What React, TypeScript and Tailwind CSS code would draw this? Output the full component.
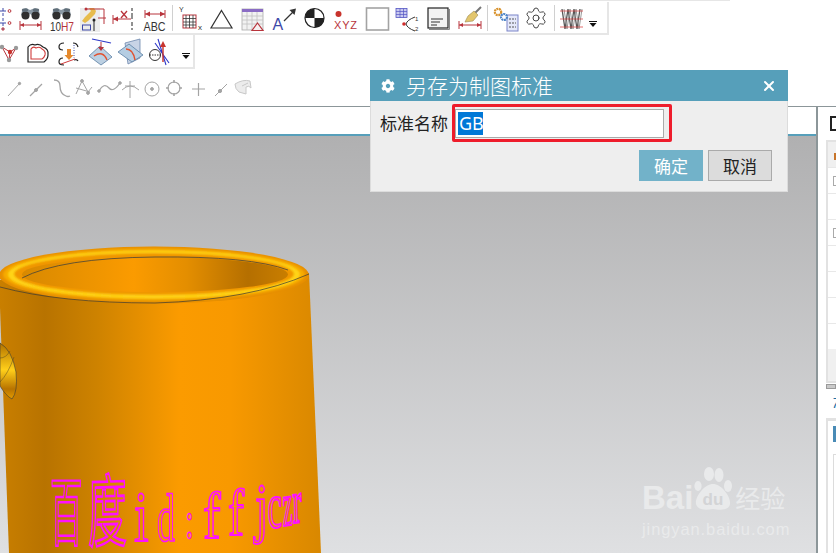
import React from "react";
import { Settings, X } from "lucide-react";
import { FaCog } from "react-icons/fa";

const RED = "#b8343c";
const BLUE = "#3d48a8";

const Ico = ({ w = 31, h = 32, children }: { w?: number; h?: number; children: React.ReactNode }) => (
	<svg width={w} height={h} viewBox={`0 0 ${w} ${h}`} className="shrink-0">
		{children}
	</svg>
);

const Sep = () => (
	<div className="w-[5px] flex justify-center shrink-0">
		<div className="w-px h-[26px] mt-[3px] bg-[#d0d0d0]" />
	</div>
);

const Binoculars = () => (
	<g>
		<path d="M7 9 L11 6 L15 8 L20 6 L24 9 L25 13 L20 15 L15 12 L11 15 L6 13 Z" fill="#8a98a3" />
		<circle cx="10.5" cy="13.5" r="4" fill="#2f2f2f" />
		<circle cx="20.5" cy="13.5" r="4" fill="#2f2f2f" />
		<ellipse cx="10" cy="8" rx="3.2" ry="1.8" fill="#5f6d78" />
		<ellipse cx="21" cy="8" rx="3.2" ry="1.8" fill="#5f6d78" />
	</g>
);

const DropArrow = ({ y }: { y: number }) => (
	<g fill="#111">
		<rect x="5" y={y} width="8" height="1" />
		<path d={`M5.5 ${y + 2} h7 l-3.5 4 z`} />
	</g>
);

const Row1 = () => (
	<div className="flex h-[33px] w-[609px] border-b-2 border-r-2 border-[#e6e6e6]">
		<Ico w={14.5}>
			<path d="M3 6V28" stroke={BLUE} strokeDasharray="3 2" />
			<path d="M0 9H6M0 21H6" stroke={BLUE} />
			<circle cx="9.5" cy="9" r="1.4" fill="none" stroke={RED} />
			<circle cx="9.5" cy="21" r="1.4" fill="none" stroke={RED} />
			<circle cx="3" cy="27" r="1.2" fill="none" stroke={RED} />
		</Ico>
		<Ico>
			<Binoculars />
			<path d="M5 23H26M5 19V28M26 19V28" stroke={RED} fill="none" />
			<path d="M5 23l4-2v4zM26 23l-4-2v4z" fill={RED} />
		</Ico>
		<Ico>
			<Binoculars />
			<text x="4" y="28.5" fontSize="13" fontFamily="Liberation Sans, sans-serif" fill="#333" textLength="11" lengthAdjust="spacingAndGlyphs">10</text>
			<text x="15" y="28.5" fontSize="13" fontFamily="Liberation Sans, sans-serif" fill={RED} textLength="13" lengthAdjust="spacingAndGlyphs">H7</text>
		</Ico>
		<Ico>
			<rect x="3" y="6" width="20" height="24" fill="#ececec" />
			<path d="M8 15 L14 9 L12 6 L17 6 L19 9 L18 12 L11 19 L8 21 L5 19 Z" fill="#e7bc4c" />
			<path d="M9 7H27M27 7V22M21 16H29" stroke={RED} fill="none" />
			<circle cx="9" cy="7" r="1.5" fill={RED} />
			<rect x="5.5" y="23" width="8" height="5" fill="none" stroke={BLUE} />
			<path d="M17 17V29" stroke="#222" />
			<circle cx="17" cy="18" r="1.5" fill="#222" />
		</Ico>
		<Ico>
			<path d="M24 6V9M24 11V17M24 20V24M24 26V28" stroke="#222" />
			<path d="M5 17H23M5 13V22" stroke={RED} fill="none" />
			<path d="M5 17l5-2.5v5z" fill={RED} />
			<path d="M13 9l6 7M19 9l-6 7" stroke={RED} strokeWidth="1.3" />
		</Ico>
		<Ico>
			<path d="M6 12H26M6 8V16M26 8V16" stroke={RED} fill="none" />
			<path d="M6 12l5-2.5v5zM26 12l-5-2.5v5z" fill={RED} />
			<text x="4.5" y="28.5" fontSize="13" fontFamily="Liberation Sans, sans-serif" fill="#333" textLength="22" lengthAdjust="spacingAndGlyphs">ABC</text>
		</Ico>
		<Sep />
		<Ico>
			<text x="4" y="10" fontSize="7" fontFamily="Liberation Sans, sans-serif" fill="#333">Y</text>
			<rect x="8" y="13" width="13" height="13" fill="#fff" stroke={RED} />
			<path d="M11 13V26M14.5 13V26M18 13V26M8 16.5H21M8 20H21M8 23H21" stroke="#333" strokeWidth="0.8" />
			<text x="23" y="28" fontSize="8" fontFamily="Liberation Sans, sans-serif" fill="#333">x</text>
		</Ico>
		<Ico>
			<path d="M15.5 8.5 L26 26 H5 Z" fill="none" stroke="#333" strokeWidth="1.2" />
		</Ico>
		<Ico>
			<rect x="5" y="7" width="21" height="21" fill="#f2f2f2" stroke="#aaa" strokeWidth="0.8" />
			<rect x="5" y="7" width="21" height="3" fill="#8a6cc4" />
			<path d="M5 14H26M5 18H26M5 22H26M10 10V28M15 10V28M20 10V28" stroke="#c0c0c0" strokeWidth="0.8" />
			<path d="M20.5 21 L26 28.5 H15 Z" fill="#f6f0f0" stroke={RED} strokeWidth="1.2" />
		</Ico>
		<Ico>
			<text x="4.5" y="28" fontSize="16" fontFamily="Liberation Sans, sans-serif" fill={BLUE}>A</text>
			<path d="M16 19L25 10" stroke="#333" strokeWidth="1.2" />
			<path d="M28 6.5l-6.5 1.5 5 5z" fill="#333" />
		</Ico>
		<Ico>
			<circle cx="15.5" cy="16" r="9.5" fill="#fff" stroke="#222" strokeWidth="1.2" />
			<path d="M15.5 16H6A9.5 9.5 0 0 1 15.5 6.5Z" fill="#222" />
			<path d="M15.5 16H25A9.5 9.5 0 0 1 15.5 25.5Z" fill="#222" />
		</Ico>
		<Ico>
			<circle cx="8.5" cy="12" r="3" fill="#c8332c" />
			<text x="4" y="27" fontSize="11" fontFamily="Liberation Sans, sans-serif" fill={RED} textLength="23">XYZ</text>
		</Ico>
		<Ico>
			<rect x="5.5" y="6" width="22" height="22" fill="#fff" stroke="#a3a3a3" strokeWidth="1.6" />
		</Ico>
		<Ico>
			<rect x="4" y="6.5" width="11" height="9" fill="#c9c9ef" stroke="#5456c4" strokeWidth="0.8" />
			<path d="M8 6.5V15.5M11.5 6.5V15.5M4 9.5H15M4 12.5H15" stroke="#5456c4" strokeWidth="0.7" />
			<circle cx="12" cy="22" r="1.8" fill="#d02d2d" />
			<path d="M23 15Q15 18 14 22Q15 26 23 29" stroke="#333" fill="none" />
			<text x="23" y="19" fontSize="6" fontFamily="Liberation Sans, sans-serif" fill="#333">1</text>
			<text x="23" y="29" fontSize="6" fontFamily="Liberation Sans, sans-serif" fill="#333">2</text>
		</Ico>
		<Ico>
			<rect x="5" y="6" width="20" height="20" fill="#f2f2f2" stroke="#222" strokeWidth="1.2" />
			<path d="M6 27.5H26.5V7" stroke="#888" fill="none" />
			<path d="M8 17H20M8 20H17M8 23H14" stroke="#333" />
		</Ico>
		<Ico>
			<path d="M27 5L20 12" stroke="#777" strokeWidth="2" />
			<path d="M14 14 L20 9 L24 13 L19 19 L11 20 Z" fill="#e3c66d" stroke="#9a8a50" strokeWidth="0.6" />
			<path d="M5 23H27M5 19V27M27 19V27" stroke={RED} fill="none" />
			<path d="M5 23l4-2v4zM27 23l-4-2v4z" fill={RED} />
		</Ico>
		<Sep />
		<Ico>
			<rect x="17" y="13" width="11" height="16" fill="#e4e8fa" stroke="#7b84c8" />
			<path d="M19 17H26M19 21H26M19 25H26" stroke="#555" strokeDasharray="2 1" />
			<circle cx="8" cy="10" r="3.2" fill="#fff" stroke="#d8932f" strokeWidth="2.2" strokeDasharray="2 0.6" />
			<circle cx="14" cy="15" r="3" fill="#fff" stroke="#4f86c8" strokeWidth="2.2" strokeDasharray="2 0.6" />
		</Ico>
		<div className="w-[31px] flex justify-center pt-[4px] shrink-0">
			<Settings size={24} strokeWidth={1} color="#444" />
		</div>
		<Sep />
		<Ico w={27}>
			<path d="M5 7L8 27L11 7L14 27L17 7L20 27L23 7" stroke="#555" strokeWidth="1.3" fill="none" />
			<path d="M7 7L10 27L13 7L16 27L19 7L22 27L25 7" stroke="#999" strokeWidth="1" fill="none" />
			<path d="M3 9H26M3 17H26M3 25H26" stroke="#d84a4a" strokeWidth="0.8" />
		</Ico>
		<Ico w={18}>
			<DropArrow y={19} />
		</Ico>
	</div>
);

const Row2 = () => (
	<div className="flex h-[34px] w-[195px] border-b-2 border-r-2 border-[#e6e6e6] pt-[2px]">
		<Ico w={21.5}>
			<path d="M2 10L10 15L16 11M10 15L9 23M2 10L9 23M16 11L9 23" stroke={RED} fill="none" strokeWidth="1" />
			<circle cx="2" cy="10" r="2.2" fill="#999" />
			<circle cx="16" cy="11" r="2.2" fill="#999" />
			<circle cx="10" cy="15" r="2.2" fill="#c8332c" />
			<circle cx="9" cy="23" r="2.2" fill="#999" />
		</Ico>
		<Ico>
			<path d="M6 10Q9 6 13 8Q17 6 21 10Q27 12 26 18Q26 22 22 25H6Z" fill="#fff" stroke="#222" strokeWidth="1.2" />
			<path d="M9 12Q11 9 14 11Q18 9 20 12Q24 14 23 18Q22 21 20 22H9Z" fill="none" stroke="#cf3b3b" strokeWidth="1.1" />
		</Ico>
		<Ico>
			<path d="M11 6Q6 6 6 10Q6 13 10 13M10 21Q6 21 6 25Q6 28 11 28M20 6Q24 6 25 10M21 23Q24 22 25 24" stroke="#222" fill="none" strokeWidth="1.2" />
			<path d="M14 12H18V18H20.5L16 23L11.5 18H14Z" fill="#e58a2e" />
			<path d="M8 27L22 22" stroke="#d03a3a" />
			<path d="M21 8V21" stroke="#3d48a8" strokeDasharray="1 1.5" />
		</Ico>
		<Ico>
			<path d="M5 19L16 9L28 20L17 28Z" fill="#bcd0e2" stroke="#5a7fa3" strokeWidth="0.8" />
			<path d="M8 2L27 6" stroke="#2e38c8" strokeWidth="1.2" />
			<path d="M17 5V12" stroke={RED} />
			<path d="M14 10h6l-3 4z" fill={RED} />
			<path d="M10 19Q19 13 23 23" stroke="#e2512f" strokeWidth="1.4" fill="none" />
		</Ico>
		<Ico>
			<path d="M10 6L25 2V21L13 27Z" fill="#c8d4e6" stroke="#6d88ad" strokeWidth="0.8" />
			<path d="M3 15L14 7L28 18L17 25Z" fill="#b5cde2" stroke="#5a7fa3" strokeWidth="0.8" />
			<path d="M11 12Q18 12 20 23" stroke="#e2512f" strokeWidth="1.4" fill="none" />
		</Ico>
		<Ico>
			<circle cx="9" cy="18" r="5.5" fill="#fff" stroke="#333" />
			<path d="M3.5 18H14.5" stroke="#333" strokeDasharray="1.5 1" />
			<path d="M12 2L20 28M23 26L9 6" stroke="#2e38c8" strokeWidth="1.1" />
			<path d="M17 10V25" stroke="#c8332c" strokeWidth="1.4" />
			<path d="M14 10l3-6 3 6z" fill="#c8332c" />
		</Ico>
		<Ico w={18}>
			<DropArrow y={16} />
		</Ico>
	</div>
);

const Row3 = () => (
	<div className="flex h-[23px] mt-[8px] pl-[3px]">
		<svg width="252" height="23" viewBox="0 0 252 23" fill="none" stroke="#a4a4a4" strokeWidth="1">
			<path d="M5 19L17 6" />
			<circle cx="16.5" cy="6.5" r="1.2" fill="#a4a4a4" />
			<path d="M27 19L39 7" strokeWidth="1.3" />
			<circle cx="33" cy="13" r="1.5" fill="#a4a4a4" />
			<path d="M51 3Q57 3 57 9Q57 17 63 19Q65 20 67 19" strokeWidth="1.3" />
			<path d="M73 17L79 4L85 15L89 10M73 11L87 15" />
			<circle cx="79" cy="4" r="1.4" fill="#a4a4a4" />
			<circle cx="85" cy="16" r="1.4" fill="#a4a4a4" />
			<path d="M96 14Q101 5 106 11Q110 16 117 6" strokeWidth="1.3" />
			<circle cx="96" cy="14" r="1.3" fill="#a4a4a4" />
			<circle cx="117" cy="6" r="1.3" fill="#a4a4a4" />
			<path d="M119 13Q127 5 136 13M127 4V21M122 9H132" />
			<circle cx="149" cy="12" r="7" />
			<circle cx="149" cy="12" r="1.4" fill="#a4a4a4" />
			<circle cx="171" cy="11" r="6" strokeWidth="1.2" />
			<path d="M171 3V6M171 16V19M163 11H166M176 11H179" strokeWidth="1.6" />
			<path d="M189 12H202M195.5 6V19" strokeWidth="1.2" />
			<path d="M212 19L224 7" strokeWidth="1" />
			<circle cx="217" cy="14" r="1.6" fill="#a4a4a4" />
			<path d="M232 7Q240 2 247 4L248 11Q246 8 243 10L243 17L236 15Q232 12 232 7Z" fill="#ececec" stroke="#c8c8c8" />
			<path d="M239 9L245 6" stroke="#c8c8c8" />
		</svg>
	</div>
);

const Toolbar = () => (
	<div className="h-[107px] border-b border-[#8c9699] shrink-0 flex flex-col relative">
		<div className="h-[2px] w-[730px] border-t border-[#e6e6e6]" />
		<Row1 />
		<Row2 />
		<Row3 />
	</div>
);

const Mug = () => (
	<svg className="absolute inset-0" width="816" height="417" viewBox="0 136 816 417">
		<defs>
			<linearGradient id="body" x1="0" x2="320" y1="0" y2="0" gradientUnits="userSpaceOnUse">
				<stop offset="0" stopColor="#c97f00" />
				<stop offset="0.14" stopColor="#b87300" />
				<stop offset="0.3" stopColor="#cd8200" />
				<stop offset="0.56" stopColor="#fb9b00" />
				<stop offset="0.72" stopColor="#f89900" />
				<stop offset="1" stopColor="#d98800" />
			</linearGradient>
			<linearGradient id="inner" x1="22" x2="288" y1="0" y2="0" gradientUnits="userSpaceOnUse">
				<stop offset="0" stopColor="#d88900" />
				<stop offset="0.42" stopColor="#fb9b00" />
				<stop offset="0.62" stopColor="#e48e00" />
				<stop offset="0.85" stopColor="#b56f00" />
				<stop offset="1" stopColor="#c97e00" />
			</linearGradient>
			<linearGradient id="handle" x1="0" x2="0" y1="345" y2="400" gradientUnits="userSpaceOnUse">
				<stop offset="0" stopColor="#b87800" />
				<stop offset="0.45" stopColor="#ffcf1a" />
				<stop offset="0.8" stopColor="#b87300" />
				<stop offset="1" stopColor="#e8a000" />
			</linearGradient>
			<filter id="soft" x="-5%" y="-20%" width="110%" height="140%">
				<feGaussianBlur stdDeviation="1.3" />
			</filter>
		</defs>
		<path d="M-1 280 L309 273 L321 553 L9 553 Z" fill="url(#body)" />
		<path d="M0 343 Q12 350 16 372 Q18 392 12 399 Q6 396 0 386 Z" fill="url(#handle)" stroke="#3b3b33" strokeWidth="0.6" />
		<path d="M0 358 Q6 358 10 351 M0 382 Q8 374 14 357" fill="none" stroke="#5a4a20" strokeWidth="0.5" />
		<ellipse cx="154" cy="275" rx="155" ry="28.5" fill="#e78f00" />
		<g filter="url(#soft)">
			<ellipse cx="154" cy="274.5" rx="151" ry="26" fill="#f7ab00" />
			<ellipse cx="154" cy="274.5" rx="146" ry="24" fill="#ffd414" />
			<ellipse cx="154" cy="274" rx="140" ry="21" fill="#f09600" />
		</g>
		<ellipse cx="155" cy="274.5" rx="133" ry="17.5" fill="url(#inner)" />
		<path d="M22 278 Q60 258 155 257 Q250 256 288 270" fill="none" stroke="#2f3a40" strokeWidth="0.7" />
		<path d="M0 287 Q60 303 155 303 Q250 300 309 274" fill="none" stroke="#3a3a33" strokeWidth="0.7" />
		<g fill="none" stroke="#ff10ff" strokeWidth="1.2" fontFamily="Noto Sans CJK SC, sans-serif">
			<text transform="translate(50 539) scale(0.9 2.05)" fontSize="36">百</text>
			<text transform="translate(88 541) scale(1.08 2.2) rotate(-1)" fontSize="36">度</text>
		</g>
		<g fill="none" stroke="#ff10ff" strokeWidth="1.2" fontFamily="Liberation Serif, serif">
			<text transform="translate(134 541) scale(1.1 1.5)" fontSize="48">i</text>
			<text transform="translate(157 541) scale(0.78 1.45)" fontSize="46">d</text>
			<text transform="translate(185 538) scale(0.8 1.3)" fontSize="40">:</text>
			<text transform="translate(203 538) scale(1.2 1.5)" fontSize="44">f</text>
			<text transform="translate(228 535) scale(1.1 1.5)" fontSize="44">f</text>
			<text transform="translate(255 530) scale(1.1 1.55)" fontSize="44">j</text>
			<text transform="translate(268 528) scale(0.85 1.7) rotate(-2)" fontSize="38">c</text>
			<text transform="translate(283 526) scale(0.65 1.8) rotate(-3)" fontSize="34">z</text>
			<text transform="translate(293 523) scale(0.85 1.9) rotate(-3)" fontSize="32">r</text>
		</g>
	</svg>
);

const Watermark = () => (
	<div className="absolute left-[642px] top-[328px] w-[150px] text-[#e9eaeb] font-['Liberation_Sans',sans-serif]">
		<div className="flex items-end h-[47px]">
			<span className="text-[33px] leading-[27px] font-bold">Bai</span>
			<svg width="42" height="47" viewBox="0 0 42 47" className="shrink-0" fill="#e9eaeb">
				<ellipse cx="5" cy="22" rx="3.6" ry="5" />
				<ellipse cx="16" cy="10" rx="5" ry="7" />
				<ellipse cx="26" cy="11" rx="4.5" ry="7" />
				<ellipse cx="35" cy="22" rx="4" ry="6" />
				<path d="M20 20C28 20 38 32 37 40C36 47 26 46 20 45C14 46 5 47 3 40C2 32 12 20 20 20Z" />
				<text x="20" y="41" textAnchor="middle" fontSize="17" fontWeight="700" fontFamily="Liberation Sans, sans-serif" fill="#d3d4d6">du</text>
			</svg>
			<span className="text-[25px] leading-[28px] font-['Noto_Sans_CJK_SC',sans-serif]">经验</span>
		</div>
		<div className="mt-[9px] text-[16.5px] leading-[18px] tracking-[0.9px] whitespace-nowrap font-['Liberation_Sans',sans-serif]">jingyan.baidu.com</div>
	</div>
);

const Dialog = () => (
	<div className="absolute left-[370px] top-[70px] w-[418px] h-[122px] bg-[#eeeeee] border border-t-0 border-[#dcdcdc] flex flex-col">
		<div className="h-[31px] bg-[#569fba] flex items-center pl-[11px] pr-[11px] text-white -mx-px shrink-0">
			<FaCog size={14} />
			<span className="ml-[11px] text-[21px] leading-[31px] font-light flex-1">另存为制图标准</span>
			<X size={16} strokeWidth={3} />
		</div>
		<div className="flex items-center pl-[9px] mt-[3px] h-[38px]">
			<span className="text-[17px] text-[#222] w-[72px] shrink-0">标准名称</span>
			<div className="w-[220px] h-[38px] border-[3px] border-[#ee1c2b] rounded-[2px] pt-[2px] pl-0">
				<div className="w-[209px] h-[29px] bg-white border border-[#aaaaaa] pl-[2px] pt-[2px]">
					<span className="block w-[25px] h-[23px] bg-[#0078d7] text-white text-[18px] leading-[23px] font-['Noto_Sans',sans-serif] pl-[1px]">GB</span>
				</div>
			</div>
		</div>
		<div className="flex justify-end gap-[5px] pr-[15px] mt-[8px]">
			<div className="w-[64px] h-[31px] bg-[#72b2c9] text-white text-[17px] flex items-center justify-center">确定</div>
			<div className="w-[64px] h-[31px] bg-[#dcdcdc] border border-[#aaaaaa] text-[#222] text-[17px] flex items-center justify-center">取消</div>
		</div>
	</div>
);

const RightPanel = () => {
	const rows = [true, false, true, false, false, false, false];
	return (
		<div className="flex-1 border-l-2 border-[#8c9699] bg-white pl-[8px] pt-[9px] overflow-hidden">
			<div className="h-[24px] pl-[4px]">
				<div className="w-[10px] h-[15px] border-2 border-[#222]" />
			</div>
			<div className="h-[243px] border-2 border-r-0 border-[#e2e2e2]">
				<div className="h-[25px] bg-[#f0f0f0] pl-[6px] pt-[11px]">
					<div className="w-[3px] h-[7px] bg-[#c8752a]" />
				</div>
				{rows.map((sign, i) => (
					<div key={i} className="h-[26px] border-t border-[#e8e8e8] pl-[5px] pt-[8px]">
						{sign && <div className="w-[8px] h-[10px] border border-[#aaa] border-r-0 bg-white" />}
					</div>
				))}
				<div className="h-[32px] bg-[#f0f0f0]" />
			</div>
			<div className="h-[5px] mt-[1px] bg-[#c9c9c9] border border-[#9a9a9a]" />
			<div className="h-[29px] pl-[6px] pt-[5px] text-[14px] leading-[18px] italic text-[#1c6ea4] font-['Liberation_Sans',sans-serif]">7</div>
			<div className="h-[200px] border-t-[3px] border-l-2 border-[#e2e2e2] pl-[5px] pt-[5px]">
				<div className="w-[4px] h-[16px] bg-[#1c6ea4] opacity-80" />
				<div className="mt-[12px] h-[140px] border border-r-0 border-[#dcdcdc]" />
			</div>
		</div>
	);
};

export default function App() {
	return (
		<div className="w-[836px] h-[553px] overflow-hidden relative bg-white flex flex-col font-['Noto_Sans_CJK_SC','Liberation_Sans',sans-serif]">
			<Toolbar />
			<div className="flex-1 flex min-h-0">
				<div className="w-[816px] shrink-0 flex flex-col">
					<div className="h-[29px] bg-white border-b-2 border-[#569fba] shrink-0" />
					<div className="flex-1 relative overflow-hidden bg-gradient-to-b from-[#b0b0b1] to-[#dfe0e2]">
						<Mug />
						<Watermark />
					</div>
				</div>
				<RightPanel />
			</div>
			<Dialog />
		</div>
	);
}
